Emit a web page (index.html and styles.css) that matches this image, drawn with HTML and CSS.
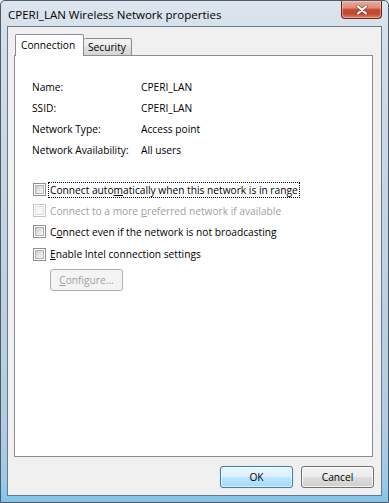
FILE: index.html
```html
<!DOCTYPE html>
<html>
<head>
<meta charset="utf-8">
<title>CPERI_LAN Wireless Network properties</title>
<link rel="stylesheet" href="styles.css">
</head>
<body>
<div class="window">
  <div class="titlebar">
    <span class="title">CPERI_LAN Wireless Network properties</span>
    <button class="close" aria-label="Close">
      <svg width="12" height="10" viewBox="0 0 12 10">
        <path d="M2 1.5 L10 8.5 M10 1.5 L2 8.5" stroke="#5a1a10" stroke-width="3.6" stroke-linecap="round" opacity="0.55"/>
        <path d="M2 1.5 L10 8.5 M10 1.5 L2 8.5" stroke="#ffffff" stroke-width="2.2" stroke-linecap="round"/>
      </svg>
    </button>
  </div>
  <div class="client">
    <div class="tabs">
      <div class="tab active">Connection</div>
      <div class="tab">Security</div>
    </div>
    <div class="panel">
      <div class="props">
        <div class="k">Name:</div><div class="v">CPERI_LAN</div>
        <div class="k">SSID:</div><div class="v">CPERI_LAN</div>
        <div class="k">Network Type:</div><div class="v">Access point</div>
        <div class="k">Network Availability:</div><div class="v">All users</div>
      </div>
      <div class="checks">
        <div class="check"><span class="cb"></span><span class="lbl focus">Connect auto<u>m</u>atically when this network is in range</span></div>
        <div class="check disabled"><span class="cb"></span><span class="lbl">Connect to a more <u>p</u>referred network if available</span></div>
        <div class="check"><span class="cb"></span><span class="lbl">C<u>o</u>nnect even if the network is not broadcasting</span></div>
        <div class="check last"><span class="cb"></span><span class="lbl"><u>E</u>nable Intel connection settings</span></div>
        <button class="btn configure" disabled><u>C</u>onfigure...</button>
      </div>
    </div>
    <div class="actions">
      <button class="btn default">OK</button>
      <button class="btn">Cancel</button>
    </div>
  </div>
</div>
</body>
</html>
```
FILE: styles.css
```css
html, body {
  margin: 0;
  padding: 0;
  background: #e4ebf2;
}
body {
  width: 389px;
  height: 503px;
  overflow: hidden;
  font-family: "Open Sans", "Noto Sans", sans-serif;
  font-size: 10.2px;
  color: #000;
}
.window {
  box-sizing: border-box;
  width: 389px;
  height: 503px;
  border: 1px solid #4e5a68;
  border-radius: 5px 5px 0 0;
  padding: 0 6px 6px 6px;
  display: flex;
  flex-direction: column;
  background: linear-gradient(to bottom, #dde6ee 0%, #d3dee8 8%, #c4d4e3 40%, #b3cbe0 85%, #9cc9e6 96%, #7fc6e8 100%);
}
.titlebar {
  height: 26px;
  display: flex;
  align-items: flex-start;
}
.title {
  font-size: 11.5px;
  line-height: 14px;
  margin: 7px 0 0 1px;
  color: #000;
  white-space: nowrap;
}
.close {
  margin-left: auto;
  width: 41px;
  height: 18px;
  padding: 0;
  border: 1px solid #6b2418;
  border-top: none;
  border-radius: 0 0 4px 4px;
  background: linear-gradient(to bottom, #e9ad9e 0%, #dc8c78 40%, #c7472f 52%, #c24a32 75%, #d8806a 100%);
  box-shadow: inset 0 0 0 1px rgba(255,220,210,0.45);
  display: flex;
  align-items: center;
  justify-content: center;
}
.client {
  flex: 1;
  background: #f0f0f0;
  border: 1px solid #68798c;
  padding: 7px 8px 7px 6px;
  display: flex;
  flex-direction: column;
}
.tabs {
  height: 21px;
  display: flex;
  align-items: flex-end;
  padding-left: 1px;
  position: relative;
  z-index: 1;
}
.tab {
  box-sizing: border-box;
  height: 17px;
  border: 1px solid #898c95;
  border-bottom: none;
  border-left: none;
  border-radius: 2px 2px 0 0;
  background: linear-gradient(to bottom, #f3f3f3 0%, #ebebeb 45%, #dedede 55%, #d5d5d5 100%);
  padding: 0 0 0 4px;
  width: 48px;
  line-height: 17px;
  font-size: 10.2px;
}
.tab.active {
  height: 22px;
  margin-bottom: -1px;
  width: 69px;
  border-left: 1px solid #898c95;
  background: #fff;
  padding-left: 5px;
  line-height: 20px;
}
.panel {
  box-sizing: border-box;
  height: 402px;
  background: #fff;
  border: 1px solid #898c95;
  padding: 21px 0 0 17px;
}
.props {
  display: grid;
  grid-template-columns: 109px auto;
  line-height: 21px;
}
.checks {
  margin-top: 18px;
  display: flex;
  flex-direction: column;
  align-items: flex-start;
}
.check {
  height: 21px;
  display: flex;
  align-items: center;
  padding-left: 1px;
}
.check.last {
  height: 22px;
  margin-top: 1px;
}
.cb {
  box-sizing: border-box;
  width: 13px;
  height: 13px;
  border: 1px solid #8e8f8f;
  background: #fff;
  padding: 1px;
  margin-right: 2px;
}
.cb::after {
  content: "";
  display: block;
  box-sizing: border-box;
  width: 9px;
  height: 9px;
  border: 1px solid #aeb2b7;
  background: linear-gradient(135deg, #c9cbce 0%, #e2e3e5 50%, #f7f7f7 100%);
}
.lbl {
  padding: 0 1px;
  line-height: 14px;
  border: 1px dotted transparent;
  white-space: nowrap;
}
.lbl.focus {
  border-color: #000;
}
.check.disabled .lbl {
  color: #a0a0a0;
}
.check.disabled .cb {
  border-color: #c6c6c6;
}
.check.disabled .cb::after {
  border-color: #dedede;
  background: #f6f6f6;
}
.btn {
  box-sizing: border-box;
  width: 73px;
  height: 22px;
  padding: 0;
  border: 1px solid #707070;
  border-radius: 3px;
  background: linear-gradient(to bottom, #f2f2f2 0%, #ebebeb 48%, #dddddd 52%, #cfcfcf 100%);
  box-shadow: inset 0 0 0 1px rgba(255,255,255,0.75);
  font-family: inherit;
  font-size: 10.2px;
  color: #000;
}
.btn.configure {
  margin: 4px 0 0 18px;
  border-color: #adb2b5;
  background: #f4f4f4;
  box-shadow: none;
  color: #a0a0a0;
}
.btn.default {
  border-color: #3c7fb1;
  background: linear-gradient(to bottom, #eaf6fd 0%, #d9f0fc 48%, #bee6fd 52%, #a7d9f5 100%);
  box-shadow: inset 0 0 0 1px rgba(255,255,255,0.6), 0 0 1px #7cc6f0;
}
.actions {
  margin-top: 9px;
  margin-right: -1px;
  display: flex;
  justify-content: flex-end;
  gap: 8px;
}
```
